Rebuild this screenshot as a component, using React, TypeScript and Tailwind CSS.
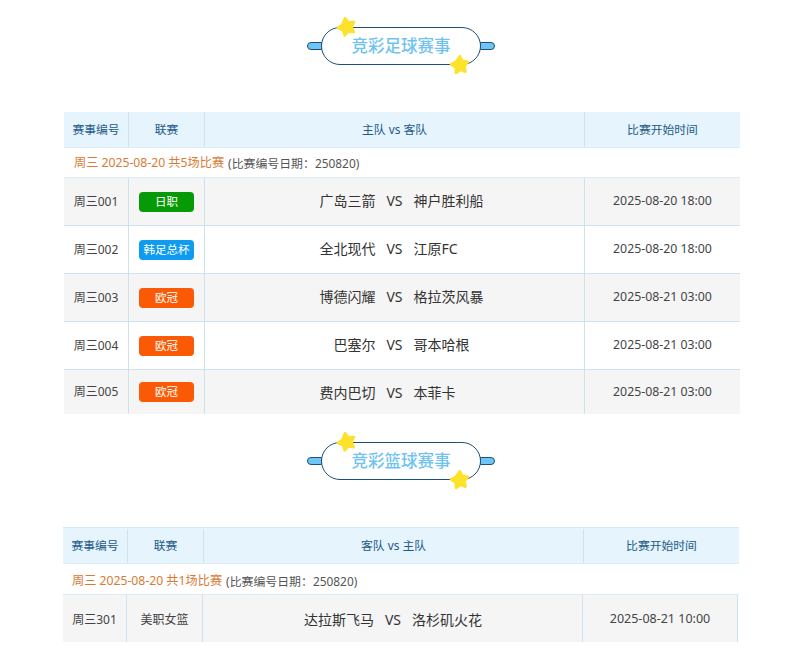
const font = "font-['Noto_Sans','Noto_Sans_CJK_SC',sans-serif]";

function Star({ className }: { className: string }) {
  return (
    <svg viewBox="0 0 24 24" className={className}>
      <path
        d="M11 2.5 L14.4 7 L20.6 6.8 L18 12 L20.4 17.6 L14.6 16.8 L10.6 21 L9 15.4 L3.4 13 L8 9.6 Z"
        fill="#fde22b"
        stroke="#fde22b"
        strokeWidth="3"
        strokeLinejoin="round"
      />
    </svg>
  );
}

function Title({ text }: { text: string }) {
  return (
    <div className="flex justify-center pr-[3px]">
      <div className="flex items-center">
        <div className="w-[15px] h-[8px] bg-[#6ec6f7] border border-[#1d4f78] rounded-l-full -mr-px" />
        <div className="relative w-[160px] h-[38px] bg-white border border-[#1d4f78] rounded-[19px] flex items-center justify-center">
          <span className="text-[16.5px] font-medium text-[#6fc3f0] leading-none">{text}</span>
          <Star className="absolute left-[13px] -top-[12px] w-[22px] h-[22px]" />
          <Star className="absolute right-[10px] -bottom-[12px] w-[22px] h-[22px] rotate-12" />
        </div>
        <div className="w-[15px] h-[8px] bg-[#6ec6f7] border border-[#1d4f78] rounded-r-full -ml-px" />
      </div>
    </div>
  );
}

function Head({ mid, className = "" }: { mid: string; className?: string }) {
  const cell = "flex items-center justify-center text-[11.8px] text-[#235a88] border-r border-[#cfe3ef]";
  return (
    <div className={`grid grid-cols-[65px_76px_380px_155px] h-[36px] bg-[#e5f4fd] border-b border-[#dcebf4] ${className}`}>
      <div className={cell}>赛事编号</div>
      <div className={cell}>联赛</div>
      <div className={cell}>{mid}</div>
      <div className="flex items-center justify-center text-[11.8px] text-[#235a88]">比赛开始时间</div>
    </div>
  );
}

function DateRow({ n, className }: { n: number; className: string }) {
  return (
    <div className={`flex items-center bg-white border-b border-[#dcebf4] ${className}`}>
      <span className="text-[12.2px] text-[#d97a33]">周三 2025-08-20 共{n}场比赛</span>
      <span className="text-[11.9px] text-[#555] ml-[4px]">(比赛编号日期：250820)</span>
    </div>
  );
}

type RowData = {
  id: string;
  league: string;
  color?: string;
  home: string;
  away: string;
  time: string;
};

function Row({ r, shaded, last }: { r: RowData; shaded: boolean; last: boolean }) {
  const cell = "flex items-center justify-center border-r border-[#cfe3ef]";
  return (
    <div
      className={`grid grid-cols-[65px_76px_380px_155px] ${last ? "h-[44px]" : "h-[48px] border-b border-[#cfe3ef]"} ${
        shaded ? "bg-[#f5f5f5]" : "bg-white"
      }`}
    >
      <div className={`${cell} text-[12px] text-[#444]`}>{r.id}</div>
      <div className={cell}>
        <span
          className={`w-[55px] h-[20px] rounded-[4px] flex items-center justify-center text-[11.5px] text-white ${r.color}`}
        >
          {r.league}
        </span>
      </div>
      <div className={`${cell} text-[14px] text-[#333] ${last ? "" : "pb-[2px]"}`}>
        <span className="w-[171px] text-right">{r.home}</span>
        <span className="w-[38px] text-center text-[14px]">VS</span>
        <span className="w-[171px] text-left">{r.away}</span>
      </div>
      <div className="flex items-center justify-center text-[12.3px] text-[#444]">{r.time}</div>
    </div>
  );
}

const football: RowData[] = [
  { id: "周三001", league: "日职", color: "bg-[#069b06]", home: "广岛三箭", away: "神户胜利船", time: "2025-08-20 18:00" },
  { id: "周三002", league: "韩足总杯", color: "bg-[#0f9cf0]", home: "全北现代", away: "江原FC", time: "2025-08-20 18:00" },
  { id: "周三003", league: "欧冠", color: "bg-[#fa5a05]", home: "博德闪耀", away: "格拉茨风暴", time: "2025-08-21 03:00" },
  { id: "周三004", league: "欧冠", color: "bg-[#fa5a05]", home: "巴塞尔", away: "哥本哈根", time: "2025-08-21 03:00" },
  { id: "周三005", league: "欧冠", color: "bg-[#fa5a05]", home: "费内巴切", away: "本菲卡", time: "2025-08-21 03:00" },
];

export default function App() {
  return (
    <div className={`w-[805px] h-[666px] bg-white overflow-hidden pt-[27px] ${font}`}>
      <Title text="竞彩足球赛事" />
      <div className="ml-[64px] w-[676px] mt-[47px]">
        <Head mid="主队 vs 客队" />
        <DateRow n={5} className="h-[30px] pl-[10px] pt-[2px]" />
        {football.map((r, i) => (
          <Row key={r.id} r={r} shaded={i % 2 === 0} last={i === football.length - 1} />
        ))}
      </div>
      <div className="mt-[28px]">
        <Title text="竞彩篮球赛事" />
      </div>
      <div className="ml-[63px] w-[676px] mt-[47px]">
        <div className="border-t border-[#d5e8f3]">
          <Head mid="客队 vs 主队" className="pt-[1px]" />
        </div>
        <DateRow n={1} className="h-[31px] pl-[9px] pt-[5px]" />
        <div className="grid grid-cols-[64px_76px_380px_154px] h-[47px] w-[675px] bg-[#f5f5f5] border-r border-[#cfe3ef]">
          <div className="flex items-center justify-center border-r border-[#cfe3ef] text-[12px] text-[#444] pt-[2px]">周三301</div>
          <div className="flex items-center justify-center border-r border-[#cfe3ef] text-[12px] text-[#444] pt-[2px]">美职女篮</div>
          <div className="flex items-center justify-center border-r border-[#cfe3ef] text-[14px] text-[#333] pt-[1px]">
            <span className="w-[171px] text-right">达拉斯飞马</span>
            <span className="w-[38px] text-center">VS</span>
            <span className="w-[170px] text-left">洛杉矶火花</span>
          </div>
          <div className="flex items-center justify-center text-[12.5px] text-[#444] pt-[2px]">2025-08-21 10:00</div>
        </div>
      </div>
    </div>
  );
}
